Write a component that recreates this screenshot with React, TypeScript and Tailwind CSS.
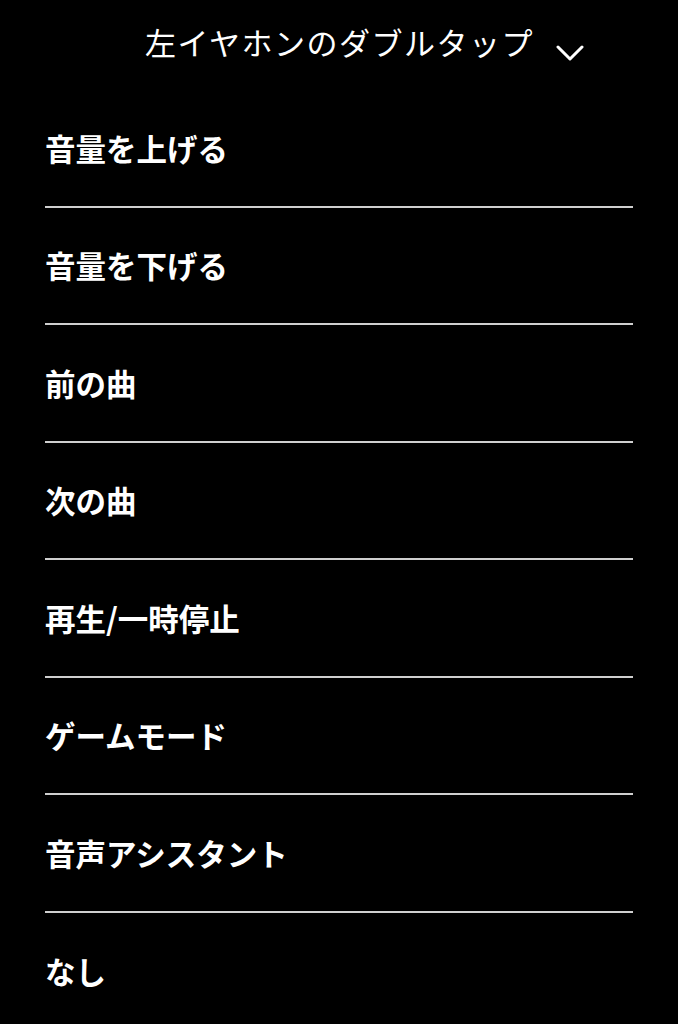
import React from 'react';

const options = [
  '音量を上げる',
  '音量を下げる',
  '前の曲',
  '次の曲',
  '再生/一時停止',
  'ゲームモード',
  '音声アシスタント',
  'なし',
];

const App: React.FC = () => {
  return (
    <div
      className="w-[678px] h-[1024px] bg-black text-white overflow-hidden"
      style={{ fontFamily: '"Noto Sans CJK JP", "Noto Sans", sans-serif' }}
    >
      {/* header */}
      <div className="h-[90px] flex items-start pt-[19px] pl-[145px]">
        <span className="text-[31px] leading-[46px] font-normal tracking-[1.5px]">左イヤホンのダブルタップ</span>
        <svg className="ml-[22px] mt-[25px]" width="28" height="18" viewBox="0 0 28 18" fill="none">
          <path d="M2 3 L14 15 L26 3" stroke="white" strokeWidth="3" strokeLinecap="round" strokeLinejoin="round" />
        </svg>
      </div>

      {/* option list */}
      <div className="pl-[45px] pr-[45px]">
        {options.map((label, i) => (
          <div
            key={label}
            className={`h-[117.5px] flex items-center ${i < options.length - 1 ? 'border-b-2 border-[#cfcfcf]' : ''}`}
          >
            <span className="text-[30.5px] font-bold leading-none">{label}</span>
          </div>
        ))}
      </div>
    </div>
  );
};

export default App;
